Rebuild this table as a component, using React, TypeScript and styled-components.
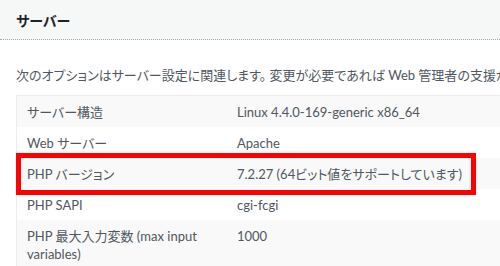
import styled, { createGlobalStyle } from 'styled-components';

const GlobalStyle = createGlobalStyle`
  html, body {
    margin: 0;
    padding: 0;
    overflow: hidden;
    background: #ffffff;
  }
  body {
    font-family: Lato, "Noto Sans CJK JP", sans-serif;
    font-feature-settings: "palt";
    color: #50575e;
  }
`;

const Page = styled.div`
  width: 700px;
`;

const SectionHeader = styled.div`
  display: flex;
  align-items: center;
  height: 39px;
  padding: 0 16px;
  background: #f6f7f7;
  border-bottom: 1px dotted #a7aaad;
`;

const Title = styled.h2`
  margin: 0;
  font-size: 14px;
  font-weight: 700;
  color: #1d2327;
`;

const Body = styled.div`
  padding: 26px 16px 0;
`;

const Intro = styled.p`
  margin: 0 0 11px;
  font-size: 13px;
  line-height: 18px;
  white-space: nowrap;
`;

const TableWrap = styled.div`
  position: relative;
`;

const InfoTable = styled.table`
  width: 100%;
  border-collapse: collapse;
  border: 1px solid #ececec;
  font-size: 13px;
  line-height: 18px;
`;

const Row = styled.tr<{ $striped?: boolean }>`
  background: ${p => (p.$striped ? '#f9f9f9' : '#ffffff')};
`;

const Label = styled.td`
  width: 190px;
  padding: 6.5px 10px;
  vertical-align: top;
`;

const Value = styled.td`
  padding: 6.5px 10px;
  vertical-align: top;
`;

// red annotation frame around the PHP version row
const Highlight = styled.div`
  position: absolute;
  left: 0;
  top: 58px;
  width: 460px;
  height: 42px;
  box-sizing: border-box;
  border: 5px solid #ff0000;
  pointer-events: none;
`;

const rows: [string, string][] = [
  ['サーバー構造', 'Linux 4.4.0-169-generic x86_64'],
  ['Web サーバー', 'Apache'],
  ['PHP バージョン', '7.2.27 (64ビット値をサポートしています)'],
  ['PHP SAPI', 'cgi-fcgi'],
  ['PHP 最大入力変数 (max input variables)', '1000'],
];

export default function App() {
  return (
    <Page>
      <GlobalStyle />
      <SectionHeader>
        <Title>サーバー</Title>
      </SectionHeader>
      <Body>
        <Intro>
          次のオプションはサーバー設定に関連します。 変更が必要であれば Web 管理者の支援が必要となります。
        </Intro>
        <TableWrap>
          <InfoTable>
            <tbody>
              {rows.map(([label, value], i) => (
                <Row key={label} $striped={i % 2 === 0}>
                  <Label>{label}</Label>
                  <Value>{value}</Value>
                </Row>
              ))}
            </tbody>
          </InfoTable>
          <Highlight />
        </TableWrap>
      </Body>
    </Page>
  );
}
